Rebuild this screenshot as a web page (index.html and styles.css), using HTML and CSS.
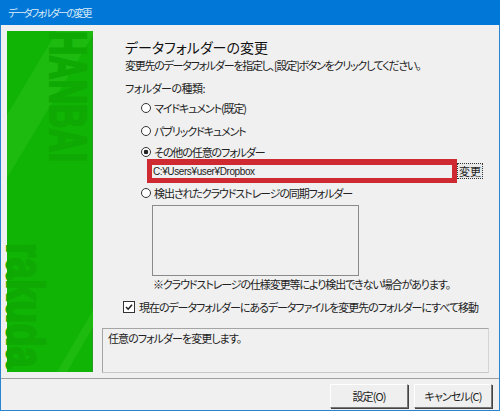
FILE: index.html
```html
<!DOCTYPE html>
<html lang="ja">
<head>
    <meta charset="UTF-8">
    <title>データフォルダーの変更</title>
    <link rel="stylesheet" href="styles.css">
</head>
<body>
    <div class="window">
        <div class="titlebar">データフォルダーの変更</div>
        <div class="content">
            <div class="banner">
                <svg class="banner-art" viewBox="0 0 86 341" width="86" height="341">
                    <polygon points="50,0 86,0 86,4 0,147 0,84" fill="#1dba10"/>
                    <polygon points="86,279 50,341 60,341 86,296" fill="#1dba10"/>
                    <text class="logo" transform="translate(43,0) rotate(90)" textLength="131" lengthAdjust="spacingAndGlyphs">HANBAI</text>
                    <text class="logo" transform="translate(0,212) rotate(90)" textLength="125" lengthAdjust="spacingAndGlyphs">rakuda</text>
                </svg>
            </div>
            <div class="main">
                <h1>データフォルダーの変更</h1>
                <p class="lead">変更先のデータフォルダーを指定し、[設定]ボタンをクリックしてください。</p>
                <p class="kind">フォルダーの種類:</p>
                <label class="radio row-1"><span class="dot"></span>マイドキュメント(既定)</label>
                <label class="radio row-2"><span class="dot"></span>パブリックドキュメント</label>
                <label class="radio row-3"><span class="dot on"></span>その他の任意のフォルダー</label>
                <div class="path-row">
                    <div class="highlight"><div class="path">C:¥Users¥user¥Dropbox</div></div>
                    <button class="browse">変更</button>
                </div>
                <label class="radio row-4"><span class="dot"></span>検出されたクラウドストレージの同期フォルダー</label>
                <div class="listbox"></div>
                <p class="note">※クラウドストレージの仕様変更等により検出できない場合があります。</p>
                <label class="check"><span class="box"><svg viewBox="0 0 10 10" width="10" height="10"><path d="M2 5 L4.2 7.2 L8 2.8" fill="none" stroke="#222" stroke-width="1.6"/></svg></span>現在のデータフォルダーにあるデータファイルを変更先のフォルダーにすべて移動</label>
                <div class="info">任意のフォルダーを変更します。</div>
            </div>
        </div>
        <div class="footer">
            <button class="btn">設定(O)</button>
            <button class="btn">キャンセル(C)</button>
        </div>
    </div>
</body>
</html>
```
FILE: styles.css
```css
* {
    box-sizing: border-box;
}

html, body {
    margin: 0;
    height: 411px;
    overflow: hidden;
}

body {
    font-family: "Noto Sans CJK JP", "Noto Sans", sans-serif;
    font-size: 11px;
    font-feature-settings: "palt";
    letter-spacing: -1.1px;
    white-space: nowrap;
    color: #222;
    background-color: #f0f0f0;
}

.window {
    width: 500px;
    height: 411px;
    display: flex;
    flex-direction: column;
    border: 1px solid #2b84cf;
    border-top: none;
}

.titlebar {
    height: 25px;
    flex: none;
    margin: 0 -1px;
    padding: 5px 0 0 8px;
    font-size: 10px;
    letter-spacing: -1.75px;
    line-height: 16px;
    color: #dcebf8;
    background-color: #0178d7;
}

.content {
    flex: 1;
    display: flex;
    gap: 9px;
    min-height: 0;
    padding: 6px 0 0 6px;
}

.banner {
    flex: none;
    width: 86px;
    height: 341px;
    background-color: #10b404;
    box-shadow: inset -1px 0 0 #2b9a25;
}

.banner-art {
    display: block;
    overflow: visible;
}

.logo {
    font-family: "Liberation Sans", sans-serif;
    font-weight: bold;
    font-size: 51px;
    letter-spacing: 0;
    fill: #0fa904;
    stroke: #0fa904;
    stroke-width: 2px;
}

.main {
    flex: 1;
    min-width: 0;
}

h1 {
    margin: 6px 0 0 23px;
    font-size: 14px;
    font-weight: normal;
    letter-spacing: 0;
    line-height: 20px;
    color: #111;
}

.lead {
    margin: 0 0 0 23px;
    letter-spacing: -1.25px;
    line-height: 16px;
}

.kind {
    margin: 7px 0 0 23px;
    letter-spacing: -0.5px;
    line-height: 16px;
}

.radio {
    display: flex;
    align-items: center;
    gap: 3px;
    margin-left: 39px;
    letter-spacing: -1.1px;
    line-height: 16px;
}

.row-1 { margin-top: 4px; }
.row-2 { margin-top: 7px; }
.row-3 { margin-top: 5px; }
.row-4 { margin-top: 2px; }

.dot {
    width: 10px;
    height: 10px;
    border: 1px solid #333;
    border-radius: 50%;
    background-color: #fff;
    flex: none;
}

.dot.on {
    background: radial-gradient(circle, #222 0 2px, #fff 2.6px);
}

.path-row {
    display: flex;
    align-items: center;
    margin: -1px 0 0 45px;
}

.highlight {
    width: 310px;
    height: 24px;
    padding: 6px 5px 5px 5px;
    background-color: #cf2a32;
}

.path {
    height: 13px;
    padding-left: 1px;
    font-family: "Liberation Sans", sans-serif;
    font-size: 10px;
    letter-spacing: -0.4px;
    line-height: 13px;
    background-color: #f0f0f0;
}

.browse {
    width: 26px;
    height: 16px;
    padding: 0;
    font: inherit;
    letter-spacing: 0;
    line-height: 14px;
    color: #222;
    background-color: #e9e9e9;
    border: 1px dotted #333;
}

.listbox {
    width: 207px;
    height: 71px;
    margin: 4px 0 0 50px;
    border: 1px solid #8a8a8a;
}

.note {
    margin: 0 0 0 51px;
    line-height: 16px;
}

.check {
    display: flex;
    align-items: center;
    gap: 5px;
    margin: 7px 0 0 22px;
    letter-spacing: -1.05px;
    line-height: 16px;
}

.box {
    width: 10px;
    height: 10px;
    flex: none;
    outline: 1px solid #333;
    background-color: #fff;
}

.box svg {
    display: block;
}

.info {
    width: 387px;
    height: 45px;
    margin-top: 13px;
    padding: 1px 5px;
    letter-spacing: -0.95px;
    line-height: 16px;
    border: 1px solid #a5a5a5;
    border-right-color: #d4d4d4;
    border-bottom-color: #c8c8c8;
}

.footer {
    flex: none;
    height: 32px;
    display: flex;
    justify-content: flex-end;
    gap: 6px;
    padding: 5px 7px 0 0;
    border-top: 1px solid #a0a0a0;
}

.btn {
    width: 78px;
    height: 24px;
    padding: 0;
    font: inherit;
    letter-spacing: -0.9px;
    color: #222;
    background-color: #efefef;
    border: 1px solid #fff;
    border-right-color: #777;
    border-bottom-color: #777;
    box-shadow: 1px 1px 0 #444;
}
```
